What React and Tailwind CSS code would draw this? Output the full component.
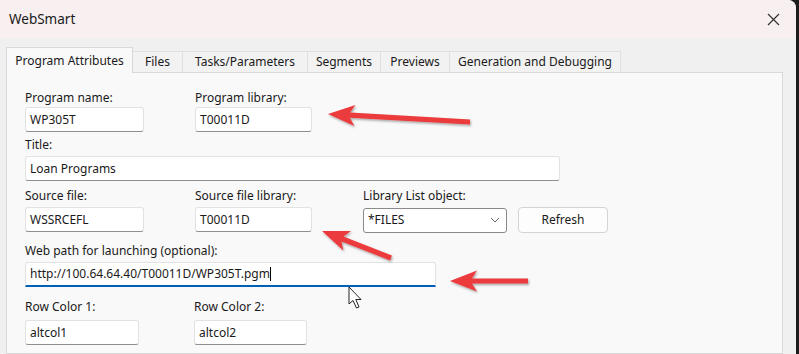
import React from "react";

// arrow polygon from tail (tx,ty) to tip (px,py)
function arrowPoints(tx, ty, px, py, headL = 27, headW = 10.5, shaftW = 2.6, notch = 5) {
  const dx = px - tx;
  const dy = py - ty;
  const len = Math.hypot(dx, dy);
  const ux = dx / len;
  const uy = dy / len;
  const nx = -uy;
  const ny = ux;
  const neckX = px - ux * (headL - notch);
  const neckY = py - uy * (headL - notch);
  const baseX = px - ux * headL;
  const baseY = py - uy * headL;
  const pts = [
    [tx + nx * shaftW, ty + ny * shaftW],
    [neckX + nx * shaftW, neckY + ny * shaftW],
    [baseX + nx * headW, baseY + ny * headW],
    [px, py],
    [baseX - nx * headW, baseY - ny * headW],
    [neckX - nx * shaftW, neckY - ny * shaftW],
    [tx - nx * shaftW, ty - ny * shaftW],
  ];
  return pts.map((p) => p.map((v) => v.toFixed(1)).join(",")).join(" ");
}

const arrows = [
  [470, 122, 328, 114],
  [391, 258, 322, 231],
  [528, 281, 450, 281],
];

function Input({ value, className = "" }) {
  return (
    <div
      className={`h-[25px] bg-white border border-[#e2e2e2] border-b-[#8f8f8f] rounded-[3px] flex items-center px-[4px] text-[12px] text-[#1a1a1a] ${className}`}
    >
      {value}
    </div>
  );
}

function Label({ children }) {
  return <div className="h-4 leading-4 text-[12px] text-[#1a1a1a] whitespace-nowrap">{children}</div>;
}

const tabs = [
  { name: "Files", w: "w-[50px]" },
  { name: "Tasks/Parameters", w: "w-[125px]" },
  { name: "Segments", w: "w-[73px]" },
  { name: "Previews", w: "w-[69px]" },
  { name: "Generation and Debugging", w: "w-[171px]" },
];

export default function App() {
  return (
    <div className="relative w-[799px] h-[354px] overflow-hidden bg-[#1c1c1c] font-['Noto_Sans',sans-serif]">
      <div className="w-[796px] h-full bg-[#f0f0f0] rounded-tr-[8px] overflow-hidden flex flex-col">
        {/* Title bar */}
        <div className="h-[38px] shrink-0 bg-[#f7eff0] flex items-center justify-between pl-[9px] pr-[16px]">
          <span className="text-[13.5px] text-[#1a1a1a]">WebSmart</span>
          <svg width="13" height="13" viewBox="0 0 13 13">
            <path d="M1 1 L12 12 M12 1 L1 12" stroke="#333" strokeWidth="1.2" />
          </svg>
        </div>

        {/* Tabs */}
        <div className="flex items-end pl-[6px] pt-[9px] shrink-0 relative z-10">
          <div className="w-[127px] h-[26px] bg-[#f9f9f9] border border-[#d9d9d9] border-b-0 flex items-center justify-center text-[12px] text-[#1a1a1a] -mb-px">
            Program Attributes
          </div>
          {tabs.map((t) => (
            <div
              key={t.name}
              className={`${t.w} h-[21px] bg-[#f2f2f2] border-t border-r border-[#e0e0e0] flex items-center justify-center text-[12px] text-[#1a1a1a] whitespace-nowrap`}
            >
              {t.name}
            </div>
          ))}
        </div>

        {/* Panel */}
        <div className="flex-1 ml-[6px] w-[777px] bg-[#f9f9f9] border border-[#d9d9d9] pl-[18px] pt-[17px]">
          <div className="flex">
            <div className="w-[170px]">
              <Label>Program name:</Label>
              <Input value="WP305T" className="mt-px w-[119px]" />
            </div>
            <div>
              <Label>Program library:</Label>
              <Input value="T00011D" className="mt-px w-[117px]" />
            </div>
          </div>

          <div className="mt-[5px]">
            <Label>Title:</Label>
            <Input value="Loan Programs" className="mt-[3px] w-[535px]" />
          </div>

          <div className="flex mt-[7px]">
            <div className="w-[170px]">
              <Label>Source file:</Label>
              <Input value="WSSRCEFL" className="mt-[3px] w-[119px]" />
            </div>
            <div className="w-[168px]">
              <Label>Source file library:</Label>
              <Input value="T00011D" className="mt-[3px] w-[117px]" />
            </div>
            <div>
              <Label>Library List object:</Label>
              <div className="flex items-center mt-[3px]">
                <div className="w-[144px] h-[25px] bg-white border border-[#8a8a8a] rounded-[3px] flex items-center justify-between px-[4px] text-[12px] text-[#1a1a1a]">
                  <span>*FILES</span>
                  <svg width="10" height="6" viewBox="0 0 10 6" className="mr-[2px]">
                    <path d="M1 1 L5 5 L9 1" stroke="#666" strokeWidth="1" fill="none" />
                  </svg>
                </div>
                <div className="ml-[11px] w-[90px] h-[26px] bg-[#fdfdfd] border border-[#d4d4d4] rounded-[4px] flex items-center justify-center text-[12px] text-[#1a1a1a]">
                  Refresh
                </div>
              </div>
            </div>
          </div>

          <div className="mt-[10px]">
            <Label>Web path for launching (optional):</Label>
            <div className="mt-[3px] w-[411px] h-[25px] bg-white border border-[#e2e2e2] border-b-2 border-b-[#005fb8] rounded-t-[3px] flex items-center px-[4px] text-[12px] text-[#1a1a1a]">
              http://100.64.64.40/T00011D/WP305T.pgm
              <span className="inline-block w-px h-[14px] bg-black" />
            </div>
          </div>

          <div className="flex mt-[12px]">
            <div className="w-[169px]">
              <Label>Row Color 1:</Label>
              <Input value="altcol1" className="mt-[5px] w-[114px] h-[23px]" />
            </div>
            <div>
              <Label>Row Color 2:</Label>
              <Input value="altcol2" className="mt-[5px] w-[113px] h-[23px]" />
            </div>
          </div>
        </div>
      </div>

      {/* annotations */}
      <svg className="absolute top-0 left-0 pointer-events-none" width="799" height="354">
        <defs>
          <filter id="sh" x="-20%" y="-50%" width="140%" height="200%">
            <feDropShadow dx="1" dy="1.5" stdDeviation="0.8" floodColor="#000" floodOpacity="0.35" />
          </filter>
        </defs>
        {arrows.map((a, i) => (
          <polygon key={i} points={arrowPoints(...a)} fill="#ec3a3d" filter="url(#sh)" />
        ))}
        <path
          d="M349 287 L349 304 L353 300.5 L356.5 308 L359 307 L355.8 299.5 L361 299.5 Z"
          fill="#fff"
          stroke="#222"
          strokeWidth="1"
          strokeLinejoin="round"
        />
      </svg>
    </div>
  );
}
